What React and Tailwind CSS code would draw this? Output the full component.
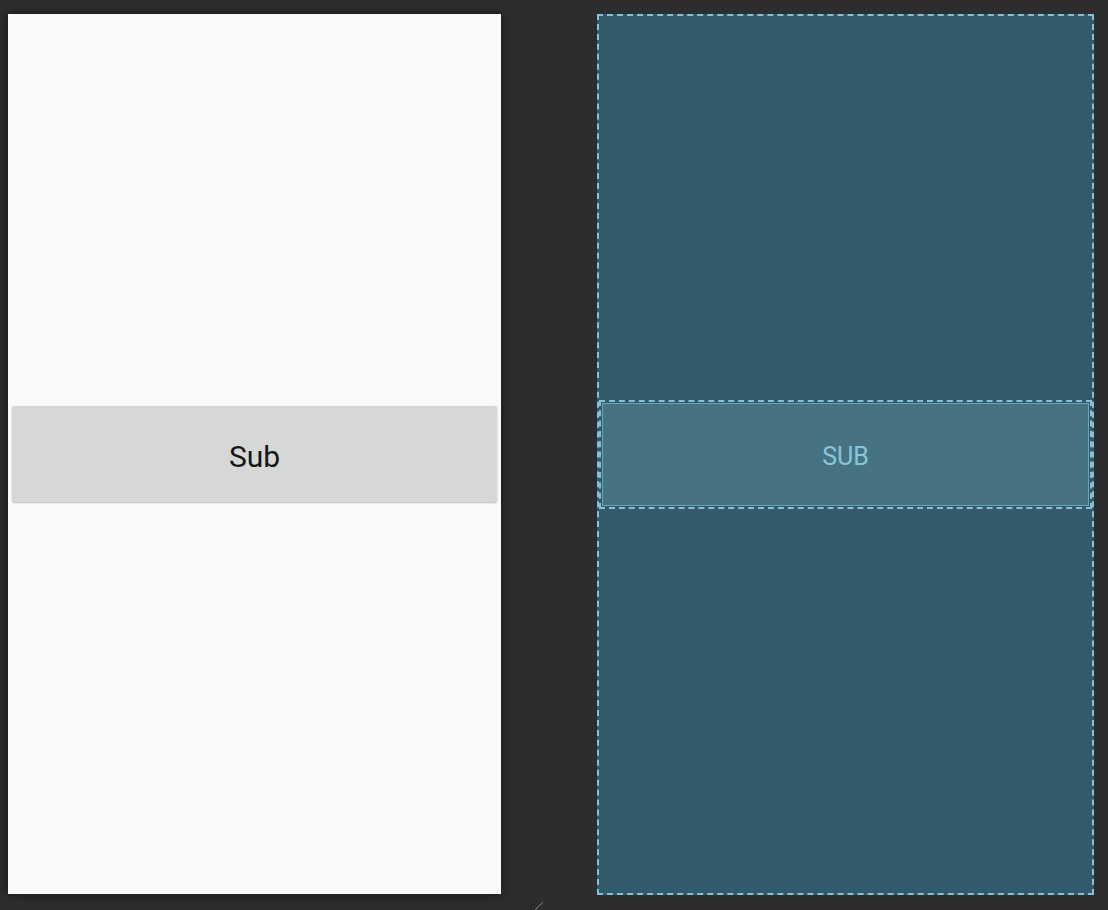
export default function App() {
  return (
    <div className="relative w-[1108px] h-[910px] bg-[#2c2d2f] overflow-hidden" style={{ fontFamily: 'Roboto, "Liberation Sans", sans-serif' }}>
      <div className="flex pt-[14px] pl-[8px] gap-[96px]">
        {/* Design view */}
        <div className="w-[493px] h-[880px] bg-[#fafafa] shadow-[0_0_10px_rgba(0,0,0,0.55)] pt-[392px] px-[4px]">
          <div className="h-[96px] bg-[#d6d7d7] rounded-[2px] shadow-[0_1px_2px_rgba(0,0,0,0.25)] flex items-center justify-center">
            <span className="text-[30px] text-[#161616] pt-[4px]">Sub</span>
          </div>
        </div>

        {/* Blueprint view */}
        <div className="w-[497px] h-[881px] bg-[#325a6b] border-2 border-dashed border-[#84c0d7] pt-[384px]">
          <div className="h-[109px] border-2 border-dashed border-[#84c0d7] p-[1px]">
            <div className="h-full border border-[#6da3b8] bg-[#467382] flex items-center justify-center">
              <span className="text-[25px] text-[#8ac5dc] pt-[4px]">SUB</span>
            </div>
          </div>
        </div>
      </div>
      <svg className="absolute left-[532px] top-[900px]" width="14" height="12" viewBox="0 0 14 12">
        <line x1="2" y1="11" x2="11" y2="2" stroke="#7a7b7d" strokeWidth="1" />
      </svg>
    </div>
  );
}
